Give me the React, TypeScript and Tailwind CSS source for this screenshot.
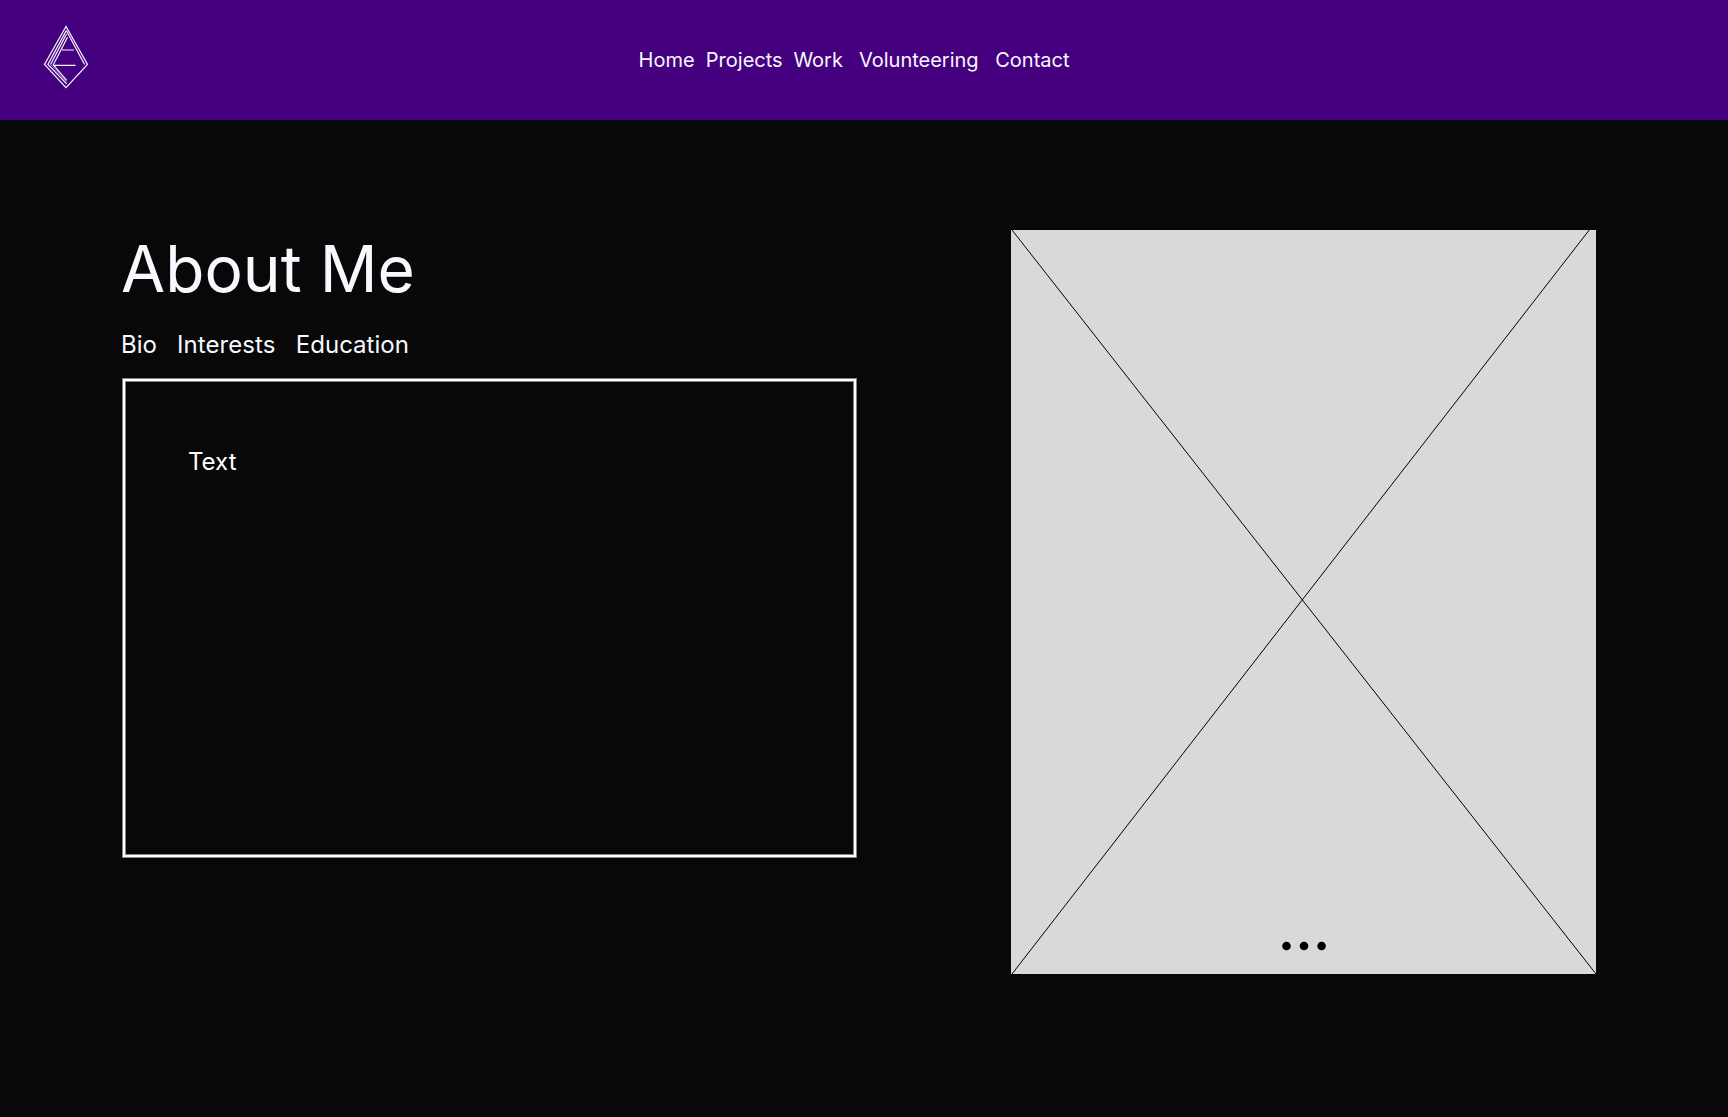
const text = "font-['Inter',sans-serif] text-[#f8f8ff]";

function Logo() {
  return (
    <svg width="60" height="80" viewBox="0 0 60 80" fill="none" stroke="#f8f8ff" strokeWidth="1.2" className="mt-[18px] ml-9 block">
      <path d="M30 8.5 8.5 46.5 30 69.7 51.5 46.5Z" />
      <path d="M30.3 12.5 11.9 46.5 30.7 65.9" />
      <path d="M30.5 16 14.6 46.5" />
      <path d="M31.5 19.3 17.3 46.8 30.7 62.4" />
      <path d="M14.6 46.5 30.7 64.1" strokeWidth="0.5" />
      <path d="M30.3 12.5 48.6 46.5" />
      <path d="M26 32H38M17.3 47.3H39.5" />
    </svg>
  );
}

function ImagePlaceholder() {
  return (
    <div className="relative h-[744px] w-[585px] bg-[#d9d9d9]">
      <svg width="585" height="744" viewBox="0 0 585 744" className="block" stroke="#000" strokeWidth="1">
        <path d="M1 0 585 744M1 744 579 -1" />
      </svg>
      <svg width="46" height="10" viewBox="0 0 46 10" className="absolute top-[711px] left-[271px]">
        <circle cx="4.5" cy="5" r="4.3" />
        <circle cx="22" cy="5" r="4.3" />
        <circle cx="39.6" cy="5" r="4.3" />
      </svg>
    </div>
  );
}

export default function App() {
  return (
    <div className={`h-[1117px] w-[1728px] overflow-hidden bg-[#080808] ${text}`}>
      <header className="flex h-[120px] bg-[#450080]">
        <Logo />
        <nav className="mt-12 ml-[542.6px] flex text-[20px] leading-6 whitespace-pre">
          <a className="mr-[11.2px]">Home</a>
          <a className="mr-[10.8px]">Projects</a>
          <a className="mr-[16px]">Work</a>
          <a className="mr-[16.6px]">Volunteering</a>
          <a>Contact</a>
        </nav>
      </header>
      <main className="flex">
        <section className="ml-[121px] w-[890px] pt-[110px]">
          <h1 className="text-[64px] leading-[77px] tracking-[0.04px]">About Me</h1>
          <div className="mt-[23px] flex text-[24px] leading-[29px] whitespace-pre">
            <a className="mr-[20px]">Bio</a>
            <a className="mr-[20.4px] tracking-[0.08px]">Interests</a>
            <a>Education</a>
          </div>
          <div className="mt-5 ml-0.5 h-[478px] w-[733px] border-2 border-white shadow-[0_0_0_1px_#848484,inset_0_0_0_1px_#848484]">
            <p className="mt-[66px] ml-[63px] text-[24px] leading-[29px] text-white">Text</p>
          </div>
        </section>
        <div className="pt-[110px]">
          <ImagePlaceholder />
        </div>
      </main>
    </div>
  );
}
